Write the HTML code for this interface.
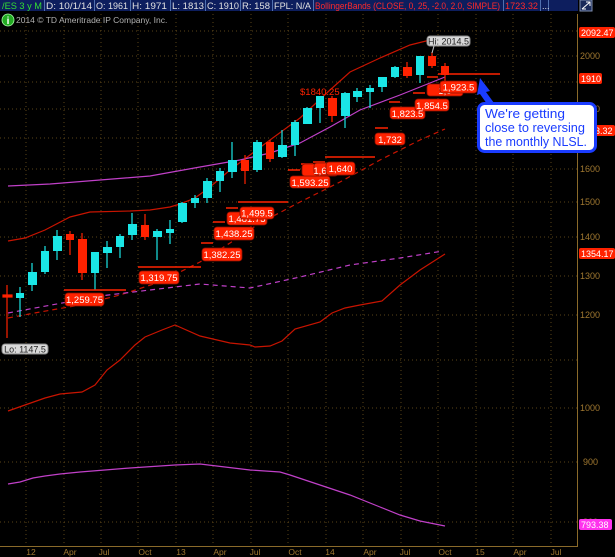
<!DOCTYPE html>
<html><head><meta charset="utf-8"><style>
html,body{margin:0;padding:0;background:#000;width:615px;height:557px;overflow:hidden;font-family:"Liberation Sans",sans-serif}
svg text{font-family:"Liberation Sans",sans-serif}
</style></head><body>
<svg width="615" height="557" viewBox="0 0 615 557" xmlns="http://www.w3.org/2000/svg">
<rect width="615" height="557" fill="#000"/>
<!-- grid -->
<g stroke="#5a4418" stroke-width="1" stroke-dasharray="1,3">
<line x1="0" y1="31" x2="577" y2="31"/><line x1="0" y1="56" x2="577" y2="56"/><line x1="0" y1="82" x2="577" y2="82"/><line x1="0" y1="109" x2="577" y2="109"/><line x1="0" y1="138" x2="577" y2="138"/><line x1="0" y1="169" x2="577" y2="169"/><line x1="0" y1="202" x2="577" y2="202"/><line x1="0" y1="237" x2="577" y2="237"/><line x1="0" y1="276" x2="577" y2="276"/><line x1="0" y1="315" x2="577" y2="315"/><line x1="0" y1="360" x2="577" y2="360"/><line x1="0" y1="408" x2="577" y2="408"/><line x1="0" y1="462" x2="577" y2="462"/><line x1="0" y1="522" x2="577" y2="522"/>
<line x1="26" y1="14" x2="26" y2="546"/><line x1="64" y1="14" x2="64" y2="546"/><line x1="101" y1="14" x2="101" y2="546"/><line x1="138" y1="14" x2="138" y2="546"/><line x1="176" y1="14" x2="176" y2="546"/><line x1="213" y1="14" x2="213" y2="546"/><line x1="251" y1="14" x2="251" y2="546"/><line x1="288" y1="14" x2="288" y2="546"/><line x1="326" y1="14" x2="326" y2="546"/><line x1="363" y1="14" x2="363" y2="546"/><line x1="401" y1="14" x2="401" y2="546"/><line x1="438" y1="14" x2="438" y2="546"/><line x1="476" y1="14" x2="476" y2="546"/><line x1="513" y1="14" x2="513" y2="546"/><line x1="551" y1="14" x2="551" y2="546"/>
</g>
<!-- bands -->
<g fill="none" stroke-width="1.2">
<polyline stroke="#c81400" points="8,241 25,238 45,230 70,217 90,212 130,211 150,210 170,207 180,204 195,198 210,187 230,170 250,155 270,140 300,118 330,90 350,72 380,58 410,45 430,40 445,37"/>
<polyline stroke="#c040c8" points="8,186 50,184 100,180 150,176 200,167 240,160 270,153 300,143 330,127 360,110 400,95 430,83 445,77"/>
<polyline stroke="#c81400" points="8,411 25,405 45,398 60,394 82,392 95,385 107,370 120,360 135,345 145,337 162,330 175,325 200,336 230,343 250,345 255,347 270,346 282,341 295,329 320,322 332,313 345,308 360,305 382,301 400,285 420,270 445,254"/>
<polyline stroke="#c81400" stroke-dasharray="5,4" points="8,318 40,312 80,305 120,295 160,282 200,262 230,243 260,223 300,202 340,182 380,160 420,140 445,129"/>
<polyline stroke="#c040c8" stroke-dasharray="5,4" points="8,313 100,296 200,284 250,288 300,277 350,265 400,258 443,251"/>
<polyline stroke="#c040c8" points="8,484 20,482 33,478 45,476 60,474 80,472 130,468 175,465 200,464 250,470 280,472 290,475 320,485 350,495 380,507 400,515 420,521 445,526"/>
</g>
<!-- candles -->
<g stroke-width="1.2">
<g stroke="#ff2200" fill="#ff2200"><line x1="7" y1="285" x2="7" y2="338"/><rect x="3" y="295" width="9" height="2"/></g>
<g stroke="#1ae6e6" fill="#1ae6e6">
<line x1="20" y1="287" x2="20" y2="317"/><rect x="16" y="293" width="8" height="5" stroke="none"/>
<line x1="32" y1="263" x2="32" y2="291"/><rect x="28" y="272" width="9" height="13" stroke="none"/>
<line x1="45" y1="246" x2="45" y2="274"/><rect x="41" y="251" width="8" height="21" stroke="none"/>
<line x1="57" y1="230" x2="57" y2="260"/><rect x="53" y="236" width="9" height="15" stroke="none"/>
<line x1="95" y1="252" x2="95" y2="290"/><rect x="91" y="252" width="8" height="21" stroke="none"/>
<line x1="107" y1="241" x2="107" y2="268"/><rect x="103" y="247" width="9" height="6" stroke="none"/>
<line x1="120" y1="234" x2="120" y2="258"/><rect x="116" y="236" width="8" height="11" stroke="none"/>
<line x1="132" y1="213" x2="132" y2="240"/><rect x="128" y="224" width="9" height="11" stroke="none"/>
<line x1="157" y1="229" x2="157" y2="260"/><rect x="153" y="231" width="9" height="6" stroke="none"/>
<line x1="170" y1="220" x2="170" y2="244"/><rect x="166" y="229" width="8" height="4" stroke="none"/>
<line x1="182" y1="202" x2="182" y2="223"/><rect x="178" y="203" width="9" height="19" stroke="none"/>
<line x1="195" y1="195" x2="195" y2="208"/><rect x="191" y="198" width="8" height="5" stroke="none"/>
<line x1="207" y1="178" x2="207" y2="203"/><rect x="203" y="181" width="9" height="17" stroke="none"/>
<line x1="220" y1="168" x2="220" y2="192"/><rect x="216" y="171" width="8" height="10" stroke="none"/>
<line x1="232" y1="142" x2="232" y2="178"/><rect x="228" y="160" width="9" height="12" stroke="none"/>
<line x1="257" y1="140" x2="257" y2="172"/><rect x="253" y="142" width="9" height="28" stroke="none"/>
<line x1="282" y1="130" x2="282" y2="158"/><rect x="278" y="145" width="9" height="12" stroke="none"/>
<line x1="295" y1="120" x2="295" y2="156"/><rect x="291" y="122" width="8" height="23" stroke="none"/>
<line x1="307" y1="107" x2="307" y2="124"/><rect x="303" y="108" width="9" height="16" stroke="none"/>
<line x1="320" y1="96" x2="320" y2="123"/><rect x="316" y="96" width="8" height="12" stroke="none"/>
<line x1="345" y1="92" x2="345" y2="128"/><rect x="341" y="93" width="9" height="23" stroke="none"/>
<line x1="357" y1="88" x2="357" y2="102"/><rect x="353" y="91" width="9" height="6" stroke="none"/>
<line x1="370" y1="85" x2="370" y2="108"/><rect x="366" y="88" width="8" height="4" stroke="none"/>
<line x1="382" y1="77" x2="382" y2="92"/><rect x="378" y="77" width="9" height="10" stroke="none"/>
<line x1="395" y1="66" x2="395" y2="78"/><rect x="391" y="67" width="8" height="10" stroke="none"/>
<line x1="420" y1="56" x2="420" y2="83"/><rect x="416" y="56" width="8" height="19" stroke="none"/>
</g>
<g stroke="#ff2200" fill="#ff2200">
<line x1="70" y1="231" x2="70" y2="255"/><rect x="66" y="234" width="8" height="6" stroke="none"/>
<line x1="82" y1="233" x2="82" y2="280"/><rect x="78" y="239" width="9" height="34" stroke="none"/>
<line x1="145" y1="214" x2="145" y2="240"/><rect x="141" y="225" width="8" height="12" stroke="none"/>
<line x1="245" y1="155" x2="245" y2="184"/><rect x="241" y="160" width="8" height="11" stroke="none"/>
<line x1="270" y1="140" x2="270" y2="162"/><rect x="266" y="142" width="8" height="17" stroke="none"/>
<line x1="332" y1="96" x2="332" y2="122"/><rect x="328" y="98" width="9" height="18" stroke="none"/>
<line x1="407" y1="62" x2="407" y2="78"/><rect x="403" y="67" width="9" height="9" stroke="none"/>
<line x1="432" y1="52" x2="432" y2="68"/><rect x="428" y="56" width="8" height="10" stroke="none"/>
<line x1="445" y1="63" x2="445" y2="83"/><rect x="441" y="66" width="8" height="9" stroke="none"/>
</g>
</g>
<!-- NLSL lines -->
<g stroke="#ff2200" stroke-width="1.5">
<line x1="64" y1="290" x2="126" y2="290"/><line x1="138" y1="267" x2="201" y2="267"/><line x1="201" y1="243" x2="213" y2="243"/><line x1="213" y1="222" x2="225" y2="222"/><line x1="226" y1="208" x2="238" y2="208"/><line x1="238" y1="202" x2="288" y2="202"/><line x1="288" y1="170" x2="300" y2="170"/><line x1="301" y1="164" x2="313" y2="164"/><line x1="313" y1="162" x2="325" y2="162"/><line x1="325" y1="157" x2="375" y2="157"/><line x1="375" y1="128" x2="388" y2="128"/><line x1="389" y1="102" x2="400" y2="102"/><line x1="413" y1="93" x2="425" y2="93"/><line x1="427" y1="77" x2="438" y2="77"/><line x1="438" y1="74" x2="500" y2="74"/>
</g>
<g font-size="9.5" fill="#fff" text-anchor="middle">
<g fill="#ff2200" stroke="#8a1000" stroke-width="0.8">
<rect x="65" y="293" width="39" height="13" rx="3"/><rect x="139" y="271" width="40" height="13" rx="3"/><rect x="202" y="248" width="40" height="13" rx="3"/><rect x="214" y="227" width="40" height="13" rx="3"/><rect x="227" y="212" width="40" height="13" rx="3"/><rect x="290" y="176" width="40" height="12" rx="3"/><rect x="302" y="164" width="36" height="12" rx="3"/><rect x="314" y="163" width="36" height="12" rx="3"/><rect x="375" y="133" width="30" height="12" rx="3"/><rect x="390" y="107" width="35" height="12" rx="3"/><rect x="415" y="99" width="34" height="12" rx="3"/><rect x="427" y="84" width="36" height="12" rx="3"/>
</g>
<text x="84.5" y="303">1,259.75</text><text x="159" y="281">1,319.75</text><text x="222" y="258">1,382.25</text><text x="234" y="237">1,438.25</text><text x="247" y="222">1,481.75</text>
<rect x="240" y="207" width="34" height="12" rx="3" fill="#ff2200" stroke="#8a1000" stroke-width="0.8"/><text x="257" y="216.5">1,499.5</text>
<text x="310" y="186">1,593.25</text><text x="320" y="174">1,6</text><text x="332" y="173">1,6</text>
<rect x="326" y="162" width="29" height="13" rx="3" fill="#ff2200" stroke="#8a1000" stroke-width="0.8"/><text x="340.5" y="172">1,640</text>
<text x="390" y="143">1,732</text><text x="407.5" y="117">1,823.5</text><text x="432" y="109">1,854.5</text><text x="445" y="94">1,9</text>
<rect x="440" y="81" width="37" height="12" rx="3" fill="#ff2200" stroke="#8a1000" stroke-width="0.8"/><text x="458.5" y="90.5">1,923.5</text>
</g>
<text x="300" y="95" font-size="9.5" fill="#ff2200">$1840.25</text>
<!-- hi / lo -->
<rect x="427" y="36" width="43" height="10" rx="3" fill="#d8d8d8" stroke="#888"/><text x="448.5" y="44.5" font-size="9" fill="#222" text-anchor="middle">Hi: 2014.5</text>
<line x1="434" y1="46" x2="432" y2="53" stroke="#ccc"/>
<rect x="2" y="344" width="46" height="10" rx="3" fill="#d8d8d8" stroke="#888"/><text x="25" y="352.5" font-size="9" fill="#222" text-anchor="middle">Lo: 1147.5</text>
<!-- axes -->
<line x1="577.5" y1="14" x2="577.5" y2="546" stroke="#8a6a2a"/>
<line x1="0" y1="546.5" x2="578" y2="546.5" stroke="#8a6a2a"/>
<g font-size="9" fill="#a07830">
<text x="580" y="59">2000</text><text x="580" y="172">1600</text><text x="580" y="205">1500</text><text x="580" y="240">1400</text><text x="580" y="279">1300</text><text x="580" y="318">1200</text><text x="580" y="411">1000</text><text x="583" y="465">900</text><text x="583" y="525">800</text><text x="580" y="112">1800</text>
</g>
<g font-size="8.5" fill="#a07830" text-anchor="middle">
<text x="31" y="555">12</text><text x="70" y="555">Apr</text><text x="104" y="555">Jul</text><text x="145" y="555">Oct</text><text x="181" y="555">13</text><text x="220" y="555">Apr</text><text x="255" y="555">Jul</text><text x="295" y="555">Oct</text><text x="330" y="555">14</text><text x="370" y="555">Apr</text><text x="405" y="555">Jul</text><text x="445" y="555">Oct</text><text x="480" y="555">15</text><text x="520" y="555">Apr</text><text x="556" y="555">Jul</text>
</g>
<g font-size="9" fill="#fff">
<rect x="579" y="27" width="36" height="11" rx="2" fill="#ff2200"/><text x="581" y="36">2092.47</text>
<rect x="579" y="73" width="23" height="11" rx="2" fill="#ff2200"/><text x="581" y="82">1910</text>
<rect x="593" y="125" width="22" height="11" rx="2" fill="#ff2200"/><text x="595" y="134">3.32</text>
<rect x="579" y="248" width="36" height="11" rx="2" fill="#ff2200"/><text x="581" y="257">1354.17</text>
<rect x="579" y="519" width="33" height="11" rx="2" fill="#ff33ee"/><text x="581" y="528">793.38</text>
</g>
<!-- callout -->
<polygon points="480,78 490,91 486,92 494,103 487,104 480,94 477,95" fill="#1a3cff"/>
<rect x="478.5" y="103.5" width="117" height="48" rx="6" fill="#fff" stroke="#1a3cff" stroke-width="3"/>
<g font-size="12.5" fill="#1a3cff"><text x="485" y="118" textLength="80" lengthAdjust="spacingAndGlyphs">We're getting</text><text x="485" y="132" textLength="100" lengthAdjust="spacingAndGlyphs">close to reversing</text><text x="485" y="146" textLength="102" lengthAdjust="spacingAndGlyphs">the monthly NLSL.</text></g>
<!-- header -->
<rect x="0" y="0" width="578" height="11" fill="#0d1e5e"/>
<g stroke="#5070b0" stroke-width="1"><line x1="44.5" y1="0" x2="44.5" y2="11"/><line x1="94.5" y1="0" x2="94.5" y2="11"/><line x1="130.5" y1="0" x2="130.5" y2="11"/><line x1="170.5" y1="0" x2="170.5" y2="11"/><line x1="205.5" y1="0" x2="205.5" y2="11"/><line x1="240.5" y1="0" x2="240.5" y2="11"/><line x1="272.5" y1="0" x2="272.5" y2="11"/><line x1="313.5" y1="0" x2="313.5" y2="11"/><line x1="503.5" y1="0" x2="503.5" y2="11"/><line x1="540.5" y1="0" x2="540.5" y2="11"/><line x1="548.5" y1="0" x2="548.5" y2="11"/></g>
<g font-size="9" fill="#e0e0e0" lengthAdjust="spacingAndGlyphs">
<text x="2" y="9" fill="#33dd33" textLength="40" lengthAdjust="spacingAndGlyphs">/ES 3 y M</text><text x="46" y="9" textLength="46" lengthAdjust="spacingAndGlyphs">D: 10/1/14</text><text x="96" y="9" textLength="32" lengthAdjust="spacingAndGlyphs">O: 1961</text><text x="132" y="9" textLength="35" lengthAdjust="spacingAndGlyphs">H: 1971</text><text x="172" y="9" textLength="32" lengthAdjust="spacingAndGlyphs">L: 1813</text><text x="207" y="9" textLength="32" lengthAdjust="spacingAndGlyphs">C: 1910</text><text x="242" y="9" textLength="28" lengthAdjust="spacingAndGlyphs">R: 158</text><text x="274" y="9" textLength="37" lengthAdjust="spacingAndGlyphs">FPL: N/A</text><text x="315" y="9" fill="#ff2a2a" textLength="185" lengthAdjust="spacingAndGlyphs">BollingerBands (CLOSE, 0, 25, -2.0, 2.0, SIMPLE)</text><text x="505" y="9" fill="#ff2a2a" textLength="33" lengthAdjust="spacingAndGlyphs">1723.32</text><text x="542" y="9">...</text>
</g>
<rect x="580" y="0" width="12" height="11" fill="#1a2a5a" stroke="#8090b0"/><path d="M582,9 L590,2 M586,2 L590,2 L590,6 M582,9 L586,9" stroke="#fff" fill="none"/>
<circle cx="8" cy="20" r="6" fill="#22aa22" stroke="#aaffaa" stroke-width="0.8"/><text x="8" y="24" font-size="10" font-weight="bold" fill="#fff" text-anchor="middle">i</text>
<text x="16" y="23" font-size="8.5" fill="#b0b0b0">2014 © TD Ameritrade IP Company, Inc.</text>
</svg>
</body></html>
